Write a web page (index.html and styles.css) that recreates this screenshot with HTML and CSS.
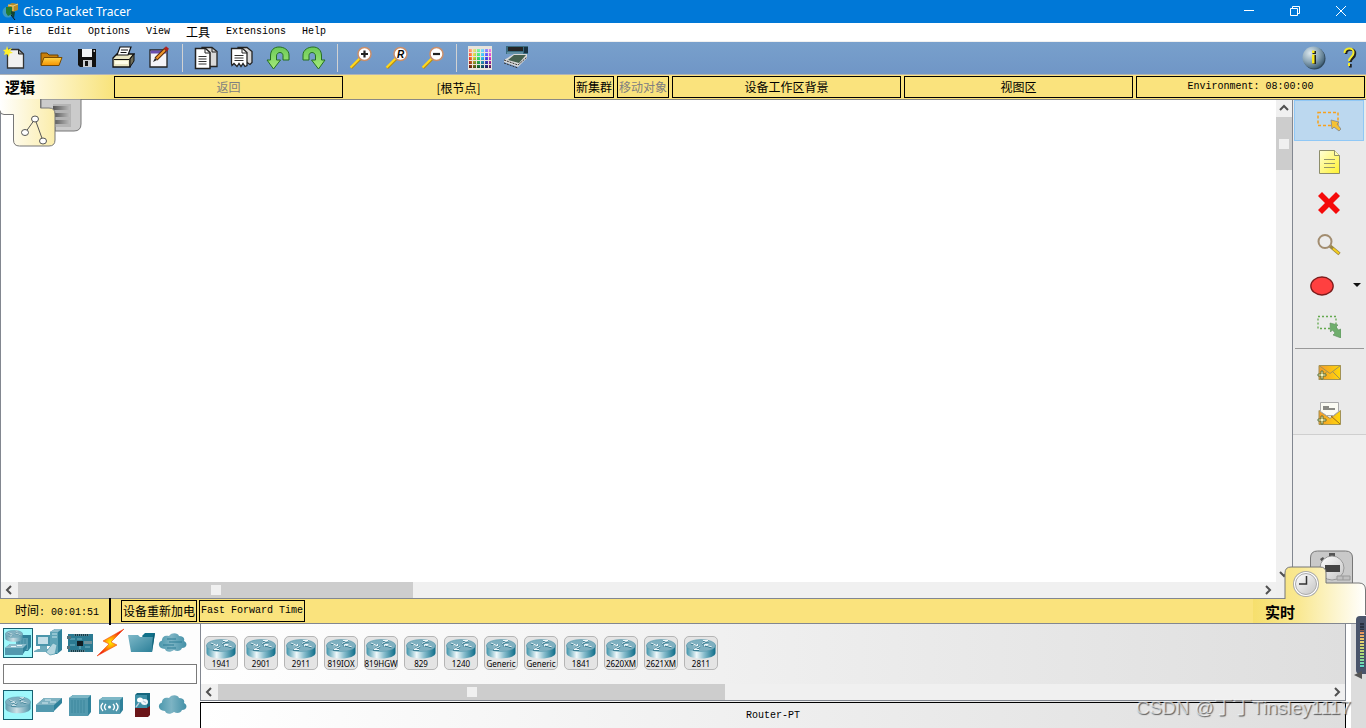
FILE: index.html
```html
<!DOCTYPE html>
<html lang="zh-CN">
<head>
    <meta charset="UTF-8">
    <meta name="viewport" content="width=device-width, initial-scale=1.0">
    <title>Cisco Packet Tracer</title>
    <link rel="stylesheet" href="styles.css">
</head>
<body>
    <!-- shared icons and gradients -->
    <svg class="defs" width="0" height="0" aria-hidden="true">
        <defs>
            <linearGradient id="g-router"><stop offset="0" stop-color="#3f93aa"/><stop offset=".35" stop-color="#f0f8fa"/><stop offset=".6" stop-color="#8bbfce"/><stop offset="1" stop-color="#0d6c88"/></linearGradient>
            <linearGradient id="g-router-grey"><stop offset="0" stop-color="#5f9db0"/><stop offset=".45" stop-color="#cfe0e6"/><stop offset="1" stop-color="#4f93a8"/></linearGradient>
            <linearGradient id="g-teal" x1="0" y1="0" x2="1" y2="1"><stop offset="0" stop-color="#7fb9c9"/><stop offset="1" stop-color="#2b7f98"/></linearGradient>
            <linearGradient id="g-cloud"><stop offset="0" stop-color="#4c98ad"/><stop offset=".45" stop-color="#7db4c4"/><stop offset="1" stop-color="#4390a7"/></linearGradient>
            <linearGradient id="g-folder" x1="0" y1="0" x2="0" y2="1"><stop offset="0" stop-color="#ffd54a"/><stop offset="1" stop-color="#f59300"/></linearGradient>
            <linearGradient id="g-green" x1="0" y1="0" x2="0" y2="1"><stop offset="0" stop-color="#6cc957"/><stop offset="1" stop-color="#a5ea7c"/></linearGradient>
            <linearGradient id="g-note" x1="0" y1="0" x2="1" y2="1"><stop offset="0" stop-color="#ffffd8"/><stop offset="1" stop-color="#fff22e"/></linearGradient>
            <linearGradient id="g-mail"><stop offset="0" stop-color="#f39a2b"/><stop offset="1" stop-color="#ffd80a"/></linearGradient>
            <radialGradient id="g-info" cx=".35" cy=".3" r=".8"><stop offset="0" stop-color="#dce8ee"/><stop offset=".5" stop-color="#8fa9b9"/><stop offset="1" stop-color="#33536a"/></radialGradient>
            <radialGradient id="g-bolt"><stop offset="0" stop-color="#fff000"/><stop offset=".4" stop-color="#ff9a00"/><stop offset="1" stop-color="#f01b10"/></radialGradient>
            <linearGradient id="g-logic"><stop offset="0" stop-color="#fff"/><stop offset="1" stop-color="#fbedaa"/></linearGradient>
            <linearGradient id="g-real"><stop offset="0" stop-color="#f6df6d"/><stop offset=".4" stop-color="#f9e891"/><stop offset="1" stop-color="#fff"/></linearGradient>
            <linearGradient id="g-rack"><stop offset="0" stop-color="#555"/><stop offset="1" stop-color="#bbb"/></linearGradient>
            <linearGradient id="g-dial" x1="0" y1="0" x2="1" y2="1"><stop offset="0" stop-color="#fff"/><stop offset="1" stop-color="#c4c4c4"/></linearGradient>
        </defs>
        <symbol id="router-top" viewBox="0 0 30 20">
            <ellipse cx="15" cy="6.500" rx="14.500" ry="6" fill="#7fb0c0" stroke="#5a9bae" stroke-width=".6"/>
            <path d="M5 4.500l6 2.500M11.500 5.500v2H7M16 5l5-2.500M17 2h5v1.500M14 8l-5 2.500M8 9v2h5M26 8.500L19 6.500M18.500 8V6h4" fill="none" stroke="#256f86" stroke-width="1.600"/>
            <path d="M5 4l6 2.500M11.500 5v2H7M16 4.500L21 2M17 1.500h5V3M14 7.500L9 10M8 8.500v2h5M26 8L19 6M18.500 7.500v-2h4" fill="none" stroke="#eef8fb"/>
        </symbol>
        <symbol id="router" viewBox="0 0 30 20">
            <path d="M.5 6v8c0 3 6 5.500 14.500 5.500S29.500 17 29.500 14V6z" fill="url(#g-router)"/>
            <use href="#router-top" width="30" height="20"/>
        </symbol>
        <symbol id="router-grey" viewBox="0 0 30 20">
            <path d="M.5 6v8c0 3 6 5.500 14.500 5.500S29.500 17 29.500 14V6z" fill="url(#g-router-grey)"/>
            <use href="#router-top" width="30" height="20"/>
        </symbol>
        <symbol id="cloud" viewBox="0 0 30 30">
            <path d="M7 21C0 21-1 14 4 12.500 4 8 8 7 11 8c3-4 9-3 10 0 4 0 6 2 5 5 4 2 3 7-2 7-1 3-5 4-8 2-4 3-8 2-9-1z" fill="url(#g-cloud)"/>
        </symbol>
        <symbol id="plus" viewBox="0 0 10 10">
            <path d="M4 1h2v3h3v2H6v3H4V6H1V4h3z" fill="#f7f1b8" stroke="#566b35" stroke-width=".9"/>
        </symbol>
        <symbol id="lens" viewBox="0 0 24 24">
            <path d="M2 22l10-10" stroke="#b98d10" stroke-width="3"/>
            <path d="M1.500 21.500l10-10" stroke="#ffd91f" stroke-width="2"/>
            <circle cx="15.500" cy="8" r="6.500" fill="#fff" stroke="#c98f6c" stroke-width="1.500"/>
        </symbol>
    </svg>

    <header class="titlebar">
        <svg class="app-logo" viewBox="0 0 18 20"><circle cx="6" cy="10" r="5.500" fill="#3c9ac0"/><path d="M6 3l4-2 6 1v6l-5 2-5-1z" fill="#b58a28"/><path d="M6 3l5 1 5-2M11 4v5" stroke="#ead27a" fill="none"/><path d="M4 5h6v7l-4 2-2-3z" fill="#217a35"/><path d="M9 9l4 1-1 6-3-4z" fill="#143"/><path d="M9 13l4 5" stroke="#111"/></svg>
        <h1>Cisco Packet Tracer</h1>
        <div class="window-buttons">
            <button aria-label="Minimize"><svg viewBox="0 0 12 12"><path d="M1 5.500h10"/></svg></button>
            <button aria-label="Restore"><svg viewBox="0 0 12 12"><path d="M1.500 3.500h7v7h-7zM3.500 3V1.500h7v7H9"/></svg></button>
            <button aria-label="Close"><svg viewBox="0 0 12 12"><path d="M1 1l10 10M11 1L1 11"/></svg></button>
        </div>
    </header>

    <nav class="menubar">
        <a href="#">File</a>
        <a href="#">Edit</a>
        <a href="#">Options</a>
        <a href="#">View</a>
        <a href="#" class="cjk">工具</a>
        <a href="#">Extensions</a>
        <a href="#">Help</a>
    </nav>

    <div class="toolbar">
        <button aria-label="New"><svg viewBox="0 0 24 24"><path d="M4.500 3.500h11l5 4.500v14h-16z" fill="#f1f1f1" stroke="#333" stroke-width="1.300"/><path d="M15.500 3.500V8h5z" fill="#999" stroke="#222"/><path d="M4 0l1.200 3.500L9 2 7 5l3 2-3.500.5L6 11 4 8 1 9l1-3-2-2 3-.5z" fill="#fff02b"/></svg></button>
        <button aria-label="Open"><svg viewBox="0 0 24 24"><path d="M2 19V7h6l2 2h9v3" fill="#c97f0a" stroke="#6b4200"/><path d="M2 19.500l3-8h18l-3 8z" fill="url(#g-folder)" stroke="#7a4b00"/></svg></button>
        <button aria-label="Save"><svg viewBox="0 0 24 24"><path d="M3 3h18v18H5l-2-2z" fill="#111"/><path d="M7 3h10v8H7z" fill="#f2f4f6"/><path d="M8 14h9v7H8z" fill="#c9ccd0"/><path d="M10 15h3v5h-3z" fill="#111"/><path d="M18.500 4h1.500v2h-1.500z" fill="#ccc"/></svg></button>
        <button aria-label="Print"><svg viewBox="0 0 24 24"><path d="M2 12l4-4h17l-4 5v8H2z" fill="#e9e6c4" stroke="#111" stroke-width="1.300"/><path d="M19 13l4-5v7l-4 6z" fill="#6f6d58" stroke="#111"/><path d="M6 9l3-8h11l-3 8z" fill="#fff" stroke="#111" stroke-width="1.200"/><path d="M10 4h7M9.500 6.500h6M3 13.500h15" stroke="#111"/><path d="M4 16.500h13" stroke="#fffde8" stroke-width="3"/></svg></button>
        <button aria-label="Activity Wizard"><svg viewBox="0 0 24 24"><path d="M3 4h17v17H3z" fill="#f4f4f8" stroke="#222" stroke-width="1.300"/><path d="M3.500 4.500h16v3h-16z" fill="#6a4eb0"/><path d="M9 13L19 3" stroke="#5d2e0a" stroke-width="4"/><path d="M9.500 12.500L18 4" stroke="#f0962c" stroke-width="2"/><path d="M18 1.500L21 4" stroke="#b02020" stroke-width="3"/><path d="M6 16l2-4 2 2z" fill="#222"/></svg></button>
        <span class="sep"></span>
        <button aria-label="Copy"><svg viewBox="0 0 24 24"><path d="M8 1.500h10l5 4v15H8z" fill="#d9d9d9" stroke="#222" stroke-width="1.300"/><path d="M1.500 2.500h10l4.500 4v16H1.500z" fill="#fff" stroke="#222" stroke-width="1.500"/><path d="M11 3v4h4.500M18 2v4h4" fill="none" stroke="#222"/><path d="M4.500 10.500h8M4.500 13h8M4.500 15.500h8M4.500 18h8" stroke="#333"/></svg></button>
        <button aria-label="Paste"><svg viewBox="0 0 24 24"><path d="M8 1.500h9l5 4v11l-2 2-3-2-9 1z" fill="#d9d9d9" stroke="#222" stroke-width="1.300"/><path d="M1.500 2.500h11l4.500 4v13l-2 1-2-3-2 3-2-3-2 3-3-3-2 2-.5-2z" fill="#fff" stroke="#222" stroke-width="1.300"/><path d="M12 3v4h5" fill="none" stroke="#222"/><path d="M4.500 9.500h9M4.500 12h9M4.500 14.500h9" stroke="#333"/></svg></button>
        <button aria-label="Undo"><svg viewBox="0 0 24 24"><path d="M4.500 14V10C4.500 4 8 1 13 1s10 3 10 8v5h-6V9.500C17 7.500 15.500 6.500 14 6.500s-3.500 1-3.500 3.500v4h4L7.500 23 1 14z" fill="url(#g-green)" stroke="#256f22"/></svg></button>
        <button aria-label="Redo"><svg viewBox="0 0 24 24"><path d="M19.500 14V10C19.500 4 16 1 11 1S1 4 1 9v5h6V9.500c0-2 1.500-3 3-3s3.500 1 3.500 3.500v4h-4l7 9 6.500-9z" fill="url(#g-green)" stroke="#256f22"/></svg></button>
        <span class="sep"></span>
        <button aria-label="Zoom In"><svg viewBox="0 0 24 24"><use href="#lens"/><path d="M12 8h7M15.500 4.500v7" stroke="#222" stroke-width="2.200"/></svg></button>
        <button aria-label="Zoom Reset"><svg viewBox="0 0 24 24"><use href="#lens"/><text x="12" y="12" class="lens-letter">R</text></svg></button>
        <button aria-label="Zoom Out"><svg viewBox="0 0 24 24"><use href="#lens"/><path d="M12 8h7" stroke="#222" stroke-width="2.200"/></svg></button>
        <span class="sep"></span>
        <button aria-label="Drawing Palette"><span class="palette"></span></button>
        <button aria-label="Custom Devices"><svg viewBox="0 0 24 24"><path d="M2 0h22v8H2z" fill="#3a6b80"/><path d="M4 1h15v4H4z" fill="#242424"/><path d="M20 1h4v6h-4z" fill="#173040"/><path d="M3 7h16" stroke="#88b4c5"/><path d="M0 14l10-6h13v4l-9 9-14-5z" fill="#d8d8d8"/><path d="M4 14l6-5h12l-7 8z" fill="#45604f"/><path d="M0 14l14 5 9-8M0 17l14 5" stroke="#333" stroke-dasharray="2 1" fill="none"/></svg></button>
        <span class="spacer"></span>
        <button aria-label="Network Information"><svg viewBox="0 0 24 24"><circle cx="12.500" cy="12.500" r="11" fill="#31495b"/><circle cx="11.500" cy="11.500" r="11" fill="url(#g-info)"/><path d="M10.500 9h3.500v9h-3.500zM10.500 5H14v3h-3.500z" fill="#222"/><path d="M10 8.500h2.500v9H10zM10 4.500h2.500V7H10z" fill="#f7e81d"/></svg></button>
        <button aria-label="Help"><svg viewBox="0 0 24 24"><g fill="none" stroke-width="2.500"><path d="M8 8c0-6 10-6 9 0 0 4-4.500 4-4.500 8M12.500 18v3.500" stroke="#222"/><path d="M6.500 7c0-6 10-6 9 0 0 4-4.500 4-4.500 8M11 17v3" stroke="#f5ec2a" stroke-width="2"/></g></svg></button>
    </div>

    <div class="locationbar">
        <strong class="mode">逻辑</strong>
        <button class="box wide cjk" disabled>返回</button>
        <span class="wide cjk">[根节点]</span>
        <button class="box cjk">新集群</button>
        <button class="box cjk" disabled>移动对象</button>
        <button class="box wide cjk">设备工作区背景</button>
        <button class="box wide cjk">视图区</button>
        <button class="box wide">Environment: 08:00:00</button>
    </div>

    <main class="workspace">
        <section class="canvas-area">
            <div class="canvas">
                <svg class="mode-tabs" width="83" height="49" viewBox="0 0 83 49">
                    <path d="M41 0v20h14v12h19q7 0 7-7V0z" fill="#cbcbcb" stroke="#777"/>
                    <path d="M53 5h18v23H53z" fill="#b4b4b4"/>
                    <path d="M53 7h17v4H53zM53 14h17v4H53zM53 21h17v4H53z" fill="url(#g-rack)"/>
                    <path d="M0 0h41v9h8q6 0 6 6v26q0 6-6 6H19q-6 0-6-6V15H4q-4 0-4-4z" fill="url(#g-logic)"/>
                    <path d="M40.500 0v9H49q6 0 6 6v26q0 6-6 6H19.500q-6 0-6-6V15.500H4q-4 0-4-4" fill="none" stroke="#777"/>
                    <path d="M25 34l10-14 8 22" fill="none" stroke="#555"/>
                    <g fill="#fff" stroke="#555"><ellipse cx="35" cy="20" rx="3.500" ry="3"/><ellipse cx="25" cy="33.500" rx="3.500" ry="3"/><ellipse cx="43" cy="42" rx="3.500" ry="3"/></g>
                </svg>
            </div>
            <div class="scroll-v">
                <svg viewBox="0 0 16 16"><path d="M4 10l4-4 4 4"/></svg>
                <div class="thumb"><i></i></div>
                <svg class="end" viewBox="0 0 16 16"><path d="M4 6l4 4 4-4"/></svg>
            </div>
            <div class="scroll-h">
                <svg viewBox="0 0 16 16"><path d="M10 4L6 8l4 4"/></svg>
                <div class="thumb"><i></i></div>
                <svg class="end" viewBox="0 0 16 16"><path d="M6 4l4 4-4 4"/></svg>
            </div>
        </section>

        <aside class="tools">
            <div class="tool-group">
                <button class="active" aria-label="Select"><svg viewBox="0 0 24 24"><path d="M1 3.500h20v13H1z" fill="none" stroke="#f7a11d" stroke-width="1.500" stroke-dasharray="3 2"/><path d="M14 11l8 2-2 2 4 5-2 2-5-4-2 2z" fill="#f6c232" stroke="#84858a" stroke-width=".8"/></svg></button>
                <button aria-label="Place Note"><svg viewBox="0 0 24 24"><path d="M2.500.5h15l5 5v18h-20z" fill="url(#g-note)" stroke="#8d8d6a"/><path d="M17.500.5v5h5" fill="#fffbb0" stroke="#8d8d6a"/><path d="M7 9.500h11M7 13.500h11M7 17.500h11" stroke="#97976a"/></svg></button>
                <button aria-label="Delete"><svg viewBox="0 0 24 24"><path d="M5 1l7 7 7-7 4 4-7 7 7 7-4 4-7-7-7 7-4-4 7-7-7-7z" fill="#f50a0a"/></svg></button>
                <button aria-label="Inspect"><svg viewBox="0 0 24 24"><path d="M13 14l9.500 8" stroke="#9b8744" stroke-width="3.500"/><path d="M16 16.500l6 5" stroke="#f5ce1d" stroke-width="2"/><circle cx="8" cy="9.500" r="6.500" fill="#ececec" stroke="#a28d70" stroke-width="2"/></svg></button>
                <button class="shape" aria-label="Draw Ellipse"><svg viewBox="0 0 24 24"><ellipse cx="12" cy="13" rx="11.200" ry="9" fill="#ff4040" stroke="#7d1c1c" stroke-width="1.300"/></svg><span class="caret"></span></button>
                <button aria-label="Resize Shape"><svg viewBox="0 0 24 24"><path d="M1 2.500h18v12H1z" fill="none" stroke="#63a94e" stroke-width="1.300" stroke-dasharray="2 2"/><path d="M13 9l8 2-2 2 2.500 3L24 15v9l-8-3 2-2-2.500-3-2 2z" fill="#6fae6d" stroke="#5c8d5c" stroke-width=".6"/></svg></button>
            </div>
            <hr>
            <div class="tool-group last">
                <button aria-label="Add Simple PDU"><svg viewBox="0 0 24 24"><path d="M2 4.500h21.500v14H2z" fill="url(#g-mail)" stroke="#a29255"/><path d="M2 4.500l11 8 10.500-8M2 18.500l8-8M23.500 18.500l-8-8" fill="none" stroke="#a29255"/><use href="#plus" x="0" y="9" width="10" height="10"/></svg></button>
                <button aria-label="Add Complex PDU"><svg viewBox="0 0 24 24"><path d="M2 8.500l11 8 10.500-8v14H2z" fill="url(#g-mail)" stroke="#a29255"/><path d="M3.500.5h18v9l-5 4h-7l-6-4z" fill="#fbfbf3" stroke="#aaa"/><path d="M6 4h6v2h6v2H6z" fill="#8a8a84"/><path d="M23 22L14 14" stroke="#a26d15"/><use href="#plus" x="0" y="13" width="10" height="10"/></svg></button>
            </div>
        </aside>
    </main>

    <div class="statusbar">
        <div class="clock"><span class="cjk">时间</span>: 00:01:51</div>
        <button class="box cjk">设备重新加电</button>
        <button class="box">Fast Forward Time</button>
        <div class="realtime">
            <svg viewBox="0 0 113 73">
                <path d="M57.500 34V8q0-7 7-7h28q7 0 7 7v26z" fill="#c9c9c9" stroke="#777"/>
                <path d="M76 3h6v4h-6zM67 9l3-2 2 3-3 2z" fill="#555"/>
                <circle cx="79" cy="18" r="12" fill="url(#g-dial)" stroke="#999"/>
                <path d="M72 15h15v7H72z" fill="#444"/>
                <path d="M84 26h13v4H84zM90 26v4" fill="#c0c0c0" stroke="#999"/>
                <path d="M0 49h32V23q0-6 6-6h29q6 0 6 6v10h33q7 0 7 7v33H0z" fill="url(#g-real)"/>
                <path d="M32 49V23q0-6 6-6h29q6 0 6 6v10h33q6.500 0 6.500 7v25" fill="none" stroke="#777"/>
                <circle cx="53" cy="34" r="13" fill="#aaa"/><circle cx="53" cy="34" r="12" fill="#fff"/>
                <circle cx="53" cy="34" r="10.500" fill="url(#g-dial)" stroke="#aaa"/>
                <path d="M53.500 26v8H46" fill="none" stroke="#333" stroke-width="1.500"/>
            </svg>
            <strong>实时</strong>
        </div>
    </div>

    <footer class="devices">
        <section class="categories">
            <div class="icon-row">
                <button class="selected" aria-label="Network Devices"><svg viewBox="0 0 30 30"><path d="M13 10l3-3h12v12l-3 4H13z" fill="#2f819a"/><path d="M13 10h12v12H13z" fill="#5a9fb3"/><path d="M22 11v9M19 11v9M16 11v9" stroke="#3a879d" stroke-width=".8"/><use href="#router-grey" x="2" y="2" width="18" height="12"/><path d="M2 20l5-4h17v4l-4 6H2z" fill="#2f819a"/><path d="M2 20h18v7H2z" fill="#5299ae"/><path d="M2 20l5-4h17l-4 4z" fill="#8dbccb"/><path d="M8 18.500h5M14 17.500h5" stroke="#e6f4f8"/></svg></button>
                <button aria-label="End Devices"><svg viewBox="0 0 30 30"><path d="M16 4l5-3h7v21l-5 4h-7z" fill="#2f819a"/><path d="M16 4h8v21h-8z" fill="#5fa4b7"/><path d="M16 4l5-3h7l-4 3z" fill="#8dbccb"/><path d="M18 6h5M18 9h5" stroke="#c6e5ec"/><path d="M2 7h14v11H2z" fill="#4b96ab"/><path d="M4 9h10v7H4z" fill="#c5dfe8"/><path d="M6 18h7v3H6zM0 23l4-2h13l-3 3H0z" fill="#6fabbc"/><path d="M12 24l7-9 4 2-2 9-5 1z" fill="#b5d6df" stroke="#4b96ab" stroke-width=".7"/></svg></button>
                <button aria-label="Components"><svg viewBox="0 0 30 30"><path d="M3 6h25v18H3z" fill="#2b7a92"/><path d="M9 7h15M5 23h15" stroke="#143c4a" stroke-width="2"/><path d="M9 7h15M5 23h15" stroke="#9bc3cf" stroke-dasharray="1 1"/><path d="M12 13h6v5h-6z" fill="#101c22"/><path d="M19 13h8v3h-8z" fill="#6f929c"/><path d="M5 11h5M5 17h5M20 19h5M12 11h5M15 18v3" stroke="#77b5c6"/><path d="M2 8h4v3H2zM2 18h3v3H2z" fill="#54717b"/></svg></button>
                <button aria-label="Connections"><svg viewBox="0 0 30 30"><path d="M28 1L7 13l6 3L1 28l20-11-6-3z" fill="url(#g-bolt)" stroke="#f04a14" stroke-width=".6"/></svg></button>
                <button aria-label="Miscellaneous"><svg viewBox="0 0 30 30"><path d="M15 8l3-3h10l-3 19z" fill="#107089"/><path d="M1 7h10l2 2h13l-1 15H4z" fill="url(#g-teal)"/><path d="M26 7l2-2-3 19z" fill="#0d5f76"/></svg></button>
                <button aria-label="Multiuser Connection"><svg viewBox="0 0 30 30"><use href="#cloud"/><path d="M9 11h9M11 14h13M5 17h11M9 20h9" stroke="#2d7d95"/></svg></button>
            </div>
            <input type="text" aria-label="Search devices">
            <div class="icon-row">
                <button class="selected" aria-label="Routers"><svg viewBox="0 0 30 30"><use href="#router-grey" x="2" y="6" width="26" height="18"/></svg></button>
                <button aria-label="Switches"><svg viewBox="0 0 30 30"><path d="M2 15l8-7h18v5l-8 8H2z" fill="#2f819a"/><path d="M2 15h18v7H2z" fill="#5299ae"/><path d="M2 15l8-7h18l-8 7z" fill="#7fb2c1"/><path d="M11 10h6M16 12h6M8 13h6" stroke="#e8f7fb" stroke-width=".8"/></svg></button>
                <button aria-label="Hubs"><svg viewBox="0 0 30 30"><path d="M4 8l4-3h18v17l-3 4H4z" fill="#2f819a"/><path d="M4 8h19v18H4z" fill="#5299ae"/><path d="M7 10v13M10 10v13M13 10v13M16 10v13M19 10v13" stroke="#37849b" stroke-width=".8"/><path d="M4 8l4-3h18l-3 3z" fill="#7db7c6"/></svg></button>
                <button aria-label="Wireless Devices"><svg viewBox="0 0 30 30"><path d="M3 10l4-3h20v13l-3 4H3z" fill="#2f819a"/><path d="M3 10h21v14H3z" fill="#5299ae"/><path d="M3 10l4-3h20l-3 3z" fill="#7db7c6"/><path d="M10 14q-3 3 0 6M7 13q-4 4 0 8M17 14q3 3 0 6M20 13q4 4 0 8" stroke="#fff" stroke-width="1.300" fill="none"/><circle cx="13.500" cy="17" r="1.500" fill="#fff"/></svg></button>
                <button aria-label="Security"><svg viewBox="0 0 30 30"><path d="M8 5l2-2h13v21l-3 3H8z" fill="#16677e"/><path d="M8 5h12v14H8z" fill="#3c8ea5"/><path d="M8 18h12l3-2v9l-2 2H8z" fill="#6b1518"/><ellipse cx="13" cy="10" rx="3" ry="2.500" fill="#fff"/><ellipse cx="17.500" cy="12" rx="3.500" ry="3" fill="#f3f8fa"/><path d="M12 13l-3 4M16 11l3 2" stroke="#bcd" stroke-width="1.300"/></svg></button>
                <button aria-label="WAN Emulation"><svg viewBox="0 0 30 30"><use href="#cloud"/></svg></button>
            </div>
        </section>

        <section class="models">
            <div class="model-panel">
                <div class="model-list">
                    <button><svg><use href="#router"/></svg>1941</button>
                    <button><svg><use href="#router"/></svg>2901</button>
                    <button><svg><use href="#router"/></svg>2911</button>
                    <button><svg><use href="#router"/></svg>819IOX</button>
                    <button><svg><use href="#router"/></svg>819HGW</button>
                    <button><svg><use href="#router"/></svg>829</button>
                    <button><svg><use href="#router"/></svg>1240</button>
                    <button><svg><use href="#router"/></svg>Generic</button>
                    <button><svg><use href="#router"/></svg>Generic</button>
                    <button><svg><use href="#router"/></svg>1841</button>
                    <button><svg><use href="#router"/></svg>2620XM</button>
                    <button><svg><use href="#router"/></svg>2621XM</button>
                    <button><svg><use href="#router"/></svg>2811</button>
                </div>
                <div class="scroll-h">
                    <svg viewBox="0 0 16 16"><path d="M10 4L6 8l4 4"/></svg>
                    <div class="thumb"><i></i></div>
                    <svg class="end" viewBox="0 0 16 16"><path d="M6 4l4 4-4 4"/></svg>
                </div>
            </div>
            <div class="model-name">Router-PT</div>
        </section>
        <div class="edge"></div>
        <div class="meter"></div>
        <p class="watermark">CSDN @丁丁Tinsley1117</p>
    </footer>
</body>
</html>
```
FILE: styles.css
```css
* { margin: 0; padding: 0; box-sizing: border-box; }
body {
    font-family: "Liberation Mono", "Noto Sans CJK SC", monospace;
    font-size: 10px;
    color: #000;
    background: #efefef;
    min-height: 100vh;
    display: flex;
    flex-direction: column;
    overflow: hidden;
}
button {
    font: inherit;
    color: inherit;
    background: none;
    border: none;
    cursor: pointer;
}
svg { display: block; }
.defs { position: absolute; }
.cjk {
    font-family: "Noto Sans CJK SC", sans-serif;
    font-size: 12px;
}

/* Title bar */
.titlebar {
    display: flex;
    align-items: center;
    height: 23px;
    padding-left: 2px;
    background: #0078d7;
    color: #fff;
}
.app-logo { width: 18px; height: 20px; }
.titlebar h1 {
    margin-left: 3px;
    font: 12px/22px "Noto Sans", sans-serif;
}
.window-buttons {
    display: flex;
    margin-left: auto;
    margin-right: 2px;
}
.window-buttons button {
    width: 46px;
    height: 23px;
    padding-bottom: 2px;
    display: flex;
    align-items: center;
    justify-content: center;
}
.window-buttons svg {
    width: 12px;
    height: 12px;
    fill: none;
    stroke: #fff;
}

/* Menu */
.menubar {
    display: flex;
    align-items: center;
    gap: 16px;
    height: 19px;
    padding: 0 8px 2px;
    background: #fff;
    border-bottom: 1px solid #f0f0f0;
}
.menubar a {
    color: #000;
    text-decoration: none;
}

/* Toolbar */
.toolbar {
    display: flex;
    align-items: center;
    gap: 6px;
    height: 33px;
    padding-right: 1px;
    background: linear-gradient(#78a0cc, #7096c6);
    border-bottom: 1px solid #b0b4b8;
}
.toolbar button {
    width: 30px;
    height: 30px;
    display: flex;
    align-items: center;
    justify-content: center;
}
.toolbar svg { width: 24px; height: 24px; }
.toolbar .sep {
    width: 1px;
    height: 28px;
    margin: 0 2px;
    background: #d2d2d2;
}
.spacer { flex: 1; }
.lens-letter {
    font: italic bold 10px "Liberation Sans", sans-serif;
}
.palette {
    width: 24px;
    height: 24px;
    border: 1px solid #e8e4dc;
    border-top-width: 3px;
    background:
        repeating-linear-gradient(90deg, transparent 0 3px, #e8e4dc 3px 4px),
        repeating-linear-gradient(transparent 0 3px, #e8e4dc 3px 4px),
        linear-gradient(rgba(255,255,255,0.4), transparent 40%, rgba(0,0,0,0.7)),
        linear-gradient(90deg, #f33, #fc3, #3e5, #3cf, #44f, #f3c);
}

/* Yellow bars */
.locationbar {
    display: flex;
    align-items: center;
    gap: 3px;
    height: 25px;
    padding-right: 1px;
    background: #fae37d;
    border-bottom: 1px solid #8a8a84;
}
.mode {
    width: 114px;
    margin-right: -3px;
    padding-left: 5px;
    font: bold 15px/24px "Noto Sans CJK SC", sans-serif;
    background: linear-gradient(90deg, #fff, #fff9e0 30%, #f8e37a);
}
.wide {
    flex: 1;
    text-align: center;
}
.box {
    height: 22px;
    border: 1px solid #000;
    padding: 0 1px;
    line-height: 20px;
    white-space: nowrap;
}
.box.cjk { line-height: 18px; }
.box:disabled { color: #808080; }

/* Workspace */
.workspace {
    flex: 1;
    display: flex;
}
.canvas-area {
    flex: 1;
    display: grid;
    grid-template: 1fr 16px / 1fr 16px;
    border-left: 1px solid #828790;
    border-right: 1px solid #828790;
}
.canvas {
    position: relative;
    background: #fff;
}
.mode-tabs {
    position: absolute;
    left: -1px;
    top: -1px;
}
.scroll-v,
.scroll-h {
    display: flex;
    gap: 1px;
    background: #f0f0f0;
}
.scroll-v { flex-direction: column; }
.scroll-v svg,
.scroll-h svg {
    flex: none;
    width: 16px;
    height: 16px;
    fill: none;
    stroke: #505050;
    stroke-width: 2;
}
.scroll-v .end { margin-top: auto; }
.scroll-h .end { margin-left: auto; }
.thumb {
    display: flex;
    align-items: center;
    justify-content: center;
    background: #cdcdcd;
}
.thumb i {
    width: 10px;
    height: 10px;
    background: #f0f0f0;
}
.scroll-v .thumb { height: 53px; }
.scroll-h .thumb { width: 31%; }

/* Right tools */
.tools {
    width: 73px;
    background: #efefef;
}
.tool-group {
    background: #eaeaea;
    padding: 0 2px 0 1px;
}
.tool-group.last {
    border-bottom: 1px solid #cfcfcf;
}
.tool-group button {
    width: 100%;
    height: 41px;
    display: flex;
    align-items: center;
    justify-content: center;
}
.tool-group svg { width: 24px; height: 24px; }
.tool-group .active {
    background: #bcd8ef;
    border: 1px solid #90c8f6;
}
.tool-group .shape {
    justify-content: flex-end;
    gap: 19px;
    padding-right: 3px;
}
.caret {
    border: 4px solid transparent;
    border-top-color: #111;
    border-bottom: none;
}
.tools hr {
    height: 6px;
    border: 2px solid #eaeaea;
    border-bottom-width: 3px;
    background: #999;
}

/* Status bar */
.statusbar {
    position: relative;
    z-index: 1;
    display: flex;
    align-items: center;
    gap: 2px;
    height: 26px;
    background: #fae37d;
    border-top: 1px solid #828790;
    border-bottom: 1px solid #828790;
}
.clock {
    width: 111px;
    margin-right: 8px;
    padding-left: 15px;
    line-height: 24px;
    border-right: 2px solid #000;
}
.realtime {
    position: absolute;
    right: 0;
    bottom: 0;
    width: 113px;
    height: 73px;
}
.realtime strong {
    position: absolute;
    left: 12px;
    bottom: 0;
    font: bold 15px/22px "Noto Sans CJK SC", sans-serif;
}

/* Devices */
.devices {
    position: relative;
    display: flex;
    height: 104px;
    background: #fff;
}
.categories {
    width: 200px;
    padding: 4px 3px;
    background: #fdfdfd;
}
.icon-row {
    display: flex;
    gap: 1px;
}
.icon-row button {
    width: 30px;
    height: 30px;
}
.icon-row .selected {
    background: #9ff8fc;
    outline: 1px solid #176070;
    outline-offset: -1px;
}
.categories input {
    display: block;
    width: 194px;
    height: 20px;
    margin: 6px 0;
    border: 1px solid #7a7a7a;
    background: #fff;
}
.models {
    flex: 1;
    display: flex;
    flex-direction: column;
    gap: 1px;
    background: linear-gradient(90deg, #fff, #dedede);
}
.model-panel {
    height: 77px;
    border: 1px solid #828790;
    border-top: none;
}
.model-list {
    display: flex;
    gap: 6px;
    height: 60px;
    padding: 12px 3px;
}
.model-list button {
    width: 34px;
    height: 34px;
    display: flex;
    flex-direction: column;
    align-items: center;
    border: 1px solid #b5b5b5;
    border-radius: 5px;
    background: #e4e4e4;
    font: 8px/9px "Noto Sans", sans-serif;
}
.model-list svg {
    flex: none;
    width: 30px;
    height: 20px;
    margin: 2px 0 0;
}
.model-panel .thumb { width: 507px; }
.model-name {
    flex: 1;
    border: 1px solid #000;
    text-align: center;
    line-height: 26px;
}
.edge {
    width: 20px;
    border-left: 5px solid #fff;
    background: #dcdcdc;
}
.meter {
    position: absolute;
    right: 0;
    top: -8px;
    z-index: 2;
    width: 10px;
    height: 58px;
    border-radius: 4px 0 0 4px;
    background:
        repeating-linear-gradient(transparent 0 2px, #3e4a61 2px 3px) 4px 7px / 4px 45px no-repeat,
        linear-gradient(#2a3140 7px, #e88a5c 8px, #e8d070 18px, #a6d978 32px, #52d6d0) 4px 7px / 4px 45px no-repeat,
        #4a556b;
}
.meter::after {
    content: "";
    position: absolute;
    right: 4px;
    bottom: -5px;
    border: 4px solid transparent;
    border-left: none;
    border-right: 8px solid #555;
}
.watermark {
    position: absolute;
    right: 15px;
    bottom: 7px;
    z-index: 1;
    font: 19px/26px "Liberation Sans", "Noto Sans CJK SC", sans-serif;
    color: rgba(255,255,255,0.6);
    text-shadow: 1px 1px 1px rgba(60,60,60,0.8);
    white-space: nowrap;
}
```
